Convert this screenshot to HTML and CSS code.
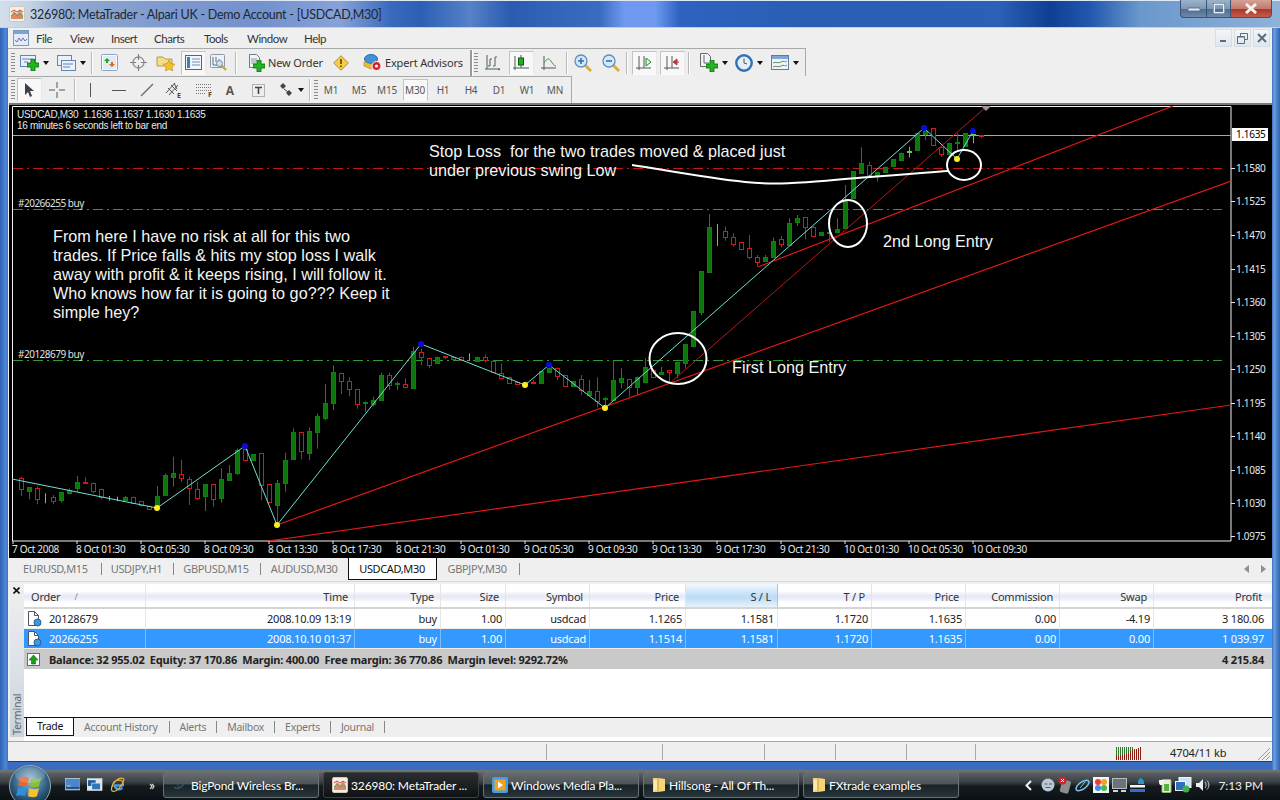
FILE: index.html
```html
<!DOCTYPE html>
<html lang="en">
<head>
<meta charset="utf-8">
<title>326980: MetaTrader - Alpari UK - Demo Account - [USDCAD,M30]</title>
<link rel="stylesheet" href="styles.css">
</head>
<body>
<svg class="defs" width="0" height="0" aria-hidden="true">
  <symbol id="i-plus" viewBox="0 0 12 12"><path d="M4 0h4v4h4v4H8v4H4V8H0V4h4z" fill="#22b422" stroke="#0c6a0c" stroke-width=".8"/></symbol>
  <symbol id="i-logo" viewBox="0 0 16 16"><rect x=".5" y=".5" width="15" height="15" rx="1.5" fill="#f6efe4" stroke="#cfc7bb"/><path d="M2 10l3-5 3 3 3-4 3 5v4H2z" fill="#d98a6a"/><path d="M2 10l3-3 3 3 3-2 3 3" fill="none" stroke="#6aa36a"/><path d="M2 6l3-2 3 2 3-2 3 2" fill="none" stroke="#c44"/></symbol>
  <symbol id="i-bars" viewBox="0 0 18 18"><path d="M3 1v14M1 15h15M14 15l2 1M6 5v7M11 3v9" fill="none" stroke="#4a5a5a"/><path d="M6 5h2M6 12H4M11 3h2M11 12H9" fill="none" stroke="#4a6a4a"/></symbol>
  <symbol id="i-axes" viewBox="0 0 18 18"><path d="M4 2v14M1 14h15" fill="none" stroke="#4a5a5a"/></symbol>
</svg>

<div class="app">
  <header class="title">
    <svg class="ico16"><use href="#i-logo"/></svg>
    <span class="title-text">326980: MetaTrader - Alpari UK - Demo Account - [USDCAD,M30]</span>
    <div class="caption">
      <span class="cap cap-min"><svg width="12" height="6"><rect x="0" y="2" width="12" height="3" fill="#e8eef5" stroke="#59708c"/></svg></span>
      <span class="cap cap-max"><svg width="12" height="11"><rect x="1" y="1" width="10" height="9" fill="none" stroke="#e8eef5" stroke-width="2"/><rect x="0" y="0" width="12" height="11" fill="none" stroke="#3b5474"/></svg></span>
      <span class="cap cap-close"><svg width="14" height="11"><path d="M2 1l10 9M12 1L2 10" stroke="#f4f1ee" stroke-width="3"/></svg></span>
    </div>
  </header>

  <div class="main">
    <nav class="menu">
      <svg class="menu-ico" width="16" height="16" viewBox="0 0 16 16"><rect x=".5" y=".5" width="15" height="15" fill="#e2ecf8" stroke="#7b98bd"/><rect x="1" y="1" width="14" height="3" fill="#7ba3d6"/><path d="M2 10l2 2 2-4 2 3 2-3 2 3 2-2" fill="none" stroke="#7a6aa8"/></svg>
      <span class="m-file">File</span><span class="m-view">View</span><span class="m-insert">Insert</span><span class="m-charts">Charts</span><span class="m-tools">Tools</span><span class="m-window">Window</span><span class="m-help">Help</span>
      <div class="mdi">
        <span class="mdi-btn"><svg width="9" height="9"><path d="M1 7h6" stroke="#5b6b80" stroke-width="2"/></svg></span>
        <span class="mdi-btn"><svg width="11" height="11"><path d="M3.500 3V.5h7v6H8M.5 3.500h7v7h-7z" fill="none" stroke="#5b6b80"/><path d="M.5 4h7" stroke="#5b6b80"/></svg></span>
        <span class="mdi-btn"><svg width="10" height="10"><path d="M1 1l8 8M9 1l-8 8" stroke="#5b6b80" stroke-width="2"/></svg></span>
      </div>
    </nav>

    <div class="toolbar tb1">
      <span class="grip"></span>
      <span class="tb w36 ml1">
        <svg width="19" height="16" viewBox="0 0 19 16"><rect x=".5" y=".5" width="15" height="11" fill="#e9f1fb" stroke="#5f86b5"/><path d="M2 4h12M4 7h4" stroke="#5f86b5"/><use href="#i-plus" x="7" y="4" width="12" height="12"/></svg><i class="caret"></i>
      </span>
      <span class="tb w38">
        <svg width="19" height="16" viewBox="0 0 19 16"><rect x=".5" y=".5" width="14" height="10" fill="#e9f1fb" stroke="#5f86b5"/><rect x="4.500" y="5.500" width="14" height="10" fill="#e9f1fb" stroke="#5f86b5"/><path d="M6 9h10M6 12h7" stroke="#5f86b5"/></svg><i class="caret"></i>
      </span>
      <span class="sep"></span>
      <span class="tb w30">
        <svg width="17" height="17" viewBox="0 0 17 17"><rect x=".5" y=".5" width="16" height="16" rx="1" fill="#f5f8fc" stroke="#8aa6c6"/><rect x="2" y="2" width="13" height="13" fill="#dfeaf5"/><path d="M6 4l3 3H7v2H5V7H3z" fill="#1fa51f"/><path d="M11 13l-3-3h2V8h2v2h2z" fill="#d86a18"/></svg>
      </span>
      <span class="tb w28">
        <svg width="17" height="17" viewBox="0 0 17 17"><circle cx="8.500" cy="8.500" r="5.500" fill="none" stroke="#8a8f94" stroke-width="1.300"/><path d="M8.500 0v6M8.500 11v6M0 8.500h6M11 8.500h6" stroke="#7d8287" stroke-width="1.200"/></svg>
      </span>
      <span class="tb w28">
        <svg width="20" height="17" viewBox="0 0 20 17"><path d="M1 3h6l2 2h7v7H1z" fill="#f3dc8a" stroke="#b89b45"/><path d="M13 6l1.900 3.600 4 .6-2.900 2.800.7 4-3.700-1.900-3.600 1.900.7-4-2.900-2.800 4-.6z" fill="#f2c132" stroke="#b5881a" stroke-width=".6"/></svg>
      </span>
      <span class="tb tb-on w25 ml1">
        <svg width="17" height="15" viewBox="0 0 17 15"><rect x=".5" y=".5" width="16" height="14" fill="#f2f7fd" stroke="#41698f"/><rect x="2" y="2" width="3" height="11" fill="#3d7dc4"/><path d="M7 4h8M7 7h8M7 10h8" stroke="#6f8fb3"/></svg>
      </span>
      <span class="tb w25">
        <svg width="18" height="18" viewBox="0 0 18 18"><rect x=".5" y=".5" width="14" height="13" rx="1" fill="#eef2f6" stroke="#8b98a6"/><path d="M3 3v8M3 11h9M6 3v5M9 5v4" stroke="#5e6f80"/><path d="M11 11l5 5" stroke="#d0a728" stroke-width="2.400"/><circle cx="9.500" cy="9.500" r="3" fill="#cfe3f5" stroke="#6d8aa6"/></svg>
      </span>
      <span class="sep ml4"></span>
      <span class="tb-txt order">
        <svg width="18" height="18" viewBox="0 0 18 18"><path d="M2.500.5h7l3 3v10h-10z" fill="#f2f4f7" stroke="#6f7a86"/><path d="M4 5h6M4 7h6M4 9h5" stroke="#8a95a0"/><use href="#i-plus" x="6" y="6" width="12" height="12"/></svg>
        <span>New Order</span>
      </span>
      <span class="tb w32 warn">
        <svg width="16" height="16" viewBox="0 0 16 16"><path d="M8 .7L15.300 8 8 15.300.7 8z" fill="#f5cc44" stroke="#a88f3f"/><path d="M8 4v5" stroke="#7b4a10" stroke-width="1.800"/><circle cx="8" cy="11.200" r="1" fill="#7b4a10"/></svg>
      </span>
      <span class="tb-txt expert">
        <svg width="19" height="18" viewBox="0 0 19 18"><ellipse cx="8" cy="5" rx="6.500" ry="4.500" fill="#3f93d6" stroke="#2b6a9c"/><path d="M1 8l7 2 7-2 1 4-8 3-7-3z" fill="#e9bd3c" stroke="#a8842a" stroke-width=".6"/><circle cx="13.500" cy="12" r="4.500" fill="#d8202a" stroke="#fff"/><circle cx="13.500" cy="12" r="1.600" fill="#fff"/></svg>
        <span>Expert Advisors</span>
      </span>
      <span class="sep dark ml7"></span>
      <span class="grip"></span>
      <span class="tb w27 ml2"><svg width="18" height="18"><use href="#i-bars"/></svg></span>
      <span class="tb tb-on w25 ml2"><svg width="18" height="18" viewBox="0 0 18 18"><path d="M3 2v14M1 14h16M9 1v13" fill="none" stroke="#4a5a5a"/><rect x="6.500" y="4" width="5" height="7" fill="#1db31d" stroke="#0a5a0a"/></svg></span>
      <span class="tb w31"><svg width="18" height="18" viewBox="0 0 18 18"><use href="#i-axes"/><path d="M4 9c3-5 5-5 7-2s3 5 5 5" fill="none" stroke="#5c8a5c"/></svg></span>
      <span class="sep"></span>
      <span class="tb w28"><svg width="18" height="18" viewBox="0 0 18 18"><path d="M11 11l6 6" stroke="#d9b13a" stroke-width="3"/><circle cx="7" cy="7" r="6" fill="#d6e8f8" stroke="#5d8fc0" stroke-width="1.300"/><path d="M4 7h6M7 4v6" stroke="#2f6fb0" stroke-width="1.600"/></svg></span>
      <span class="tb w28"><svg width="18" height="18" viewBox="0 0 18 18"><path d="M11 11l6 6" stroke="#d9b13a" stroke-width="3"/><circle cx="7" cy="7" r="6" fill="#d6e8f8" stroke="#5d8fc0" stroke-width="1.300"/><path d="M4 7h6" stroke="#2f6fb0" stroke-width="1.600"/></svg></span>
      <span class="sep"></span>
      <span class="tb tb-on w25 ml3"><svg width="18" height="18" viewBox="0 0 18 18"><use href="#i-axes"/><path d="M9 2v12" stroke="#4a5a5a"/><path d="M11 4l5 4-5 4z" fill="#eaf5ea" stroke="#1c8a1c"/></svg></span>
      <span class="tb tb-on w25 ml3"><svg width="18" height="18" viewBox="0 0 18 18"><use href="#i-axes"/><path d="M9 2v12" stroke="#4a5a5a"/><path d="M16 8h-3M14 5l-4 3 4 3z" fill="#c2333f" stroke="#c2333f"/></svg></span>
      <span class="sep ml3"></span>
      <span class="tb w40 ml3">
        <svg width="19" height="19" viewBox="0 0 19 19"><path d="M1.500.5h7l3 3v10h-10z" fill="#f3f4f5" stroke="#616a72"/><path d="M5 2v8h5" fill="none" stroke="#616a72"/><use href="#i-plus" x="7" y="7" width="12" height="12"/></svg><i class="caret"></i>
      </span>
      <span class="tb w30">
        <svg width="18" height="18" viewBox="0 0 18 18"><circle cx="9" cy="9" r="7.700" fill="#e6edf5" stroke="#2f71b6" stroke-width="2.400"/><path d="M9 4.500V9l3 1" fill="none" stroke="#555"/></svg><i class="caret"></i>
      </span>
      <span class="tb w32 ml5">
        <svg width="18" height="15" viewBox="0 0 18 15"><rect x=".5" y=".5" width="17" height="14" fill="#eef4fb" stroke="#587fa6"/><rect x="1" y="1" width="16" height="3" fill="#7fa7d2"/><path d="M2 8c3-2 5 1 8-1s4 1 6-1M2 12c3-2 5 1 8-1s4 1 6-1" fill="none" stroke="#6a8f6a"/></svg><i class="caret"></i>
      </span>
    </div>

    <div class="toolbar tb2">
      <span class="grip"></span>
      <span class="tb tb-on w25 ml2"><svg width="12" height="16" viewBox="0 0 12 16"><path d="M1 1v12l3-3 2 5 2-1-2-5h4z" fill="#3c4248"/></svg></span>
      <span class="tb w22 ml4"><svg width="16" height="16" viewBox="0 0 16 16"><path d="M8 0v6M8 10v6M0 8h6M10 8h6" stroke="#555"/></svg></span>
      <span class="sep ml6"></span>
      <span class="tb w26"><svg width="3" height="14"><path d="M1.500 0v14" stroke="#555"/></svg></span>
      <span class="tb w32"><svg width="14" height="3"><path d="M0 1.500h14" stroke="#555"/></svg></span>
      <span class="tb w24"><svg width="14" height="14"><path d="M1 13L13 1" stroke="#666" stroke-width="1.200"/></svg></span>
      <span class="tb w30"><svg width="18" height="18" viewBox="0 0 18 18"><path d="M1 12L10 2M4 14L13 4M3 7l6 6M6 4l6 6M9 2l3 6" fill="none" stroke="#555"/><text x="12" y="17" class="icotext">E</text></svg></span>
      <span class="tb w30"><svg width="18" height="16" viewBox="0 0 18 16"><path d="M1 2.500h15M1 5.500h15M1 8.500h15M1 11.500h10" stroke="#777" stroke-dasharray="1 1"/><text x="13" y="15" class="icotext">F</text></svg></span>
      <span class="tb w22 a-glyph">A</span>
      <span class="tb w34"><svg width="13" height="13" viewBox="0 0 13 13"><rect x=".5" y=".5" width="12" height="12" fill="none" stroke="#777" stroke-dasharray="1 1"/><path d="M3 3.500h7M6.500 3v7" stroke="#444" stroke-width="1.600"/></svg></span>
      <span class="tb w28 ml2"><svg width="16" height="14" viewBox="0 0 16 14"><path d="M5 0l3 3-3 3-3-3zM11 7l3 3-3 3-3-3z" fill="#444"/><path d="M6 6l4 3" stroke="#444"/></svg><i class="caret"></i></span>
      <span class="sep ml4"></span>
      <span class="grip ml2"></span>
      <div class="periods">
        <span>M1</span><span>M5</span><span>M15</span><span class="on">M30</span><span>H1</span><span>H4</span><span>D1</span><span>W1</span><span>MN</span>
      </div>
    </div>

    <section class="chart">
      <svg class="plot" width="1262" height="453" viewBox="9 105 1262 453">
        <defs><clipPath id="plot-clip"><rect x="12" y="106" width="1219" height="435"/></clipPath></defs>
        <path class="frame" d="M12.500 541V106.500H1231V541z"/>
        <path class="ticks" d="M13 541v3M77 541v3M141 541v3M205 541v3M269 541v3M333 541v3M397 541v3M461 541v3M525 541v3M589 541v3M653 541v3M717 541v3M781 541v3M845 541v3M909 541v3M973 541v3M1231 168.500h4M1231 201.500h4M1231 235.500h4M1231 269.500h4M1231 302.500h4M1231 336.500h4M1231 369.500h4M1231 403.500h4M1231 436.500h4M1231 470.500h4M1231 503.500h4M1231 536.500h4"/>
        <g clip-path="url(#plot-clip)">
          <line class="ask" x1="13" y1="135.500" x2="1231" y2="135.500"/>
          <line class="sl" x1="13" y1="168.500" x2="1222" y2="168.500"/>
          <line class="entry" x1="13" y1="209.500" x2="1222" y2="209.500"/>
          <line class="entry" x1="13" y1="360.500" x2="1222" y2="360.500"/>
          <g id="candles"></g>
          <line class="trend" x1="268" y1="541" x2="1231" y2="405"/>
          <line class="trend" x1="277" y1="525" x2="1231" y2="181"/>
          <line class="trend" x1="758" y1="267" x2="1173" y2="106"/>
          <line class="trend thin" x1="670" y1="383" x2="986" y2="107"/>
          <polyline class="zigzag" points="12,479 157,508 245,446 277,525 421,344 525,385 549,365 605,408 924,128 957,159 973,131"/>
          <circle class="lo" cx="157" cy="508" r="3"/><circle class="lo" cx="277" cy="525" r="3"/><circle class="lo" cx="525" cy="385" r="3"/><circle class="lo" cx="605" cy="408" r="3"/><circle class="lo" cx="957" cy="159" r="3"/>
          <circle class="hi" cx="245" cy="446" r="3"/><circle class="hi" cx="421" cy="344" r="3"/><circle class="hi" cx="549" cy="365" r="3"/><circle class="hi" cx="924" cy="128" r="3"/><circle class="hi" cx="973" cy="131" r="3"/>
          <path class="marker" d="M981 106h10l-5 5z"/>
        </g>
        <path class="paint" d="M632 165C665 170 705 178 745 182S815 181 870 177 930 172 948 171"/>
        <ellipse class="paint" cx="678" cy="358.500" rx="28.500" ry="25.500"/>
        <ellipse class="paint" cx="848" cy="223.500" rx="19" ry="23.500"/>
        <ellipse class="paint" cx="964" cy="165" rx="17" ry="15"/>

        <text class="info" x="17" y="118">USDCAD,M30  1.1636 1.1637 1.1630 1.1635</text>
        <text class="info" x="17" y="129">16 minutes 6 seconds left to bar end</text>
        <text class="small" x="18" y="207">#20266255 buy</text>
        <text class="small" x="18" y="358">#20128679 buy</text>

        <text class="note" x="429" y="157">Stop Loss  for the two trades moved &amp; placed just</text>
        <text class="note" x="429" y="176">under previous swing Low</text>
        <text class="note" x="53" y="242">From here I have no risk at all for this two</text>
        <text class="note" x="53" y="261">trades. If Price falls &amp; hits my stop loss I walk</text>
        <text class="note" x="53" y="280">away with profit &amp; it keeps rising, I will follow it.</text>
        <text class="note" x="53" y="299">Who knows how far it is going to go??? Keep it</text>
        <text class="note" x="53" y="318">simple hey?</text>
        <text class="note" x="732" y="373">First Long Entry</text>
        <text class="note" x="883" y="247">2nd Long Entry</text>

        <rect class="price-box" x="1232" y="128" width="36" height="13"/>
        <text class="axis current" x="1236" y="138">1.1635</text>
        <text class="axis" x="1236" y="172">1.1580</text>
        <text class="axis" x="1236" y="205">1.1525</text>
        <text class="axis" x="1236" y="239">1.1470</text>
        <text class="axis" x="1236" y="273">1.1415</text>
        <text class="axis" x="1236" y="306">1.1360</text>
        <text class="axis" x="1236" y="340">1.1305</text>
        <text class="axis" x="1236" y="373">1.1250</text>
        <text class="axis" x="1236" y="407">1.1195</text>
        <text class="axis" x="1236" y="440">1.1140</text>
        <text class="axis" x="1236" y="474">1.1085</text>
        <text class="axis" x="1236" y="507">1.1030</text>
        <text class="axis" x="1236" y="540">1.0975</text>

        <text class="axis" x="12" y="553">7 Oct 2008</text>
        <text class="axis" x="76" y="553">8 Oct 01:30</text>
        <text class="axis" x="140" y="553">8 Oct 05:30</text>
        <text class="axis" x="204" y="553">8 Oct 09:30</text>
        <text class="axis" x="268" y="553">8 Oct 13:30</text>
        <text class="axis" x="332" y="553">8 Oct 17:30</text>
        <text class="axis" x="396" y="553">8 Oct 21:30</text>
        <text class="axis" x="460" y="553">9 Oct 01:30</text>
        <text class="axis" x="524" y="553">9 Oct 05:30</text>
        <text class="axis" x="588" y="553">9 Oct 09:30</text>
        <text class="axis" x="652" y="553">9 Oct 13:30</text>
        <text class="axis" x="716" y="553">9 Oct 17:30</text>
        <text class="axis" x="780" y="553">9 Oct 21:30</text>
        <text class="axis" x="844" y="553">10 Oct 01:30</text>
        <text class="axis" x="908" y="553">10 Oct 05:30</text>
        <text class="axis" x="972" y="553">10 Oct 09:30</text>
      </svg>
    </section>

    <div class="symtabs">
      <span class="st st1">EURUSD,M15</span><i class="vbar"></i>
      <span class="st st2">USDJPY,H1</span><i class="vbar"></i>
      <span class="st st2">GBPUSD,M15</span><i class="vbar"></i>
      <span class="st st3">AUDUSD,M30</span>
      <span class="st st-on">USDCAD,M30</span>
      <span class="st st4">GBPJPY,M30</span><i class="vbar"></i>
      <span class="scroll"><svg width="6" height="8"><path d="M5 0v8L0 4z" fill="#8a9097"/></svg><svg width="6" height="8"><path d="M1 0v8l5-4z" fill="#8a9097"/></svg></span>
    </div>

    <section class="terminal">
      <aside class="tside">
        <svg class="tclose" width="7" height="7"><path d="M.5.500l6 6M6.500.500l-6 6" stroke="#111" stroke-width="1.600"/></svg>
        <span class="tlabel">Terminal</span>
      </aside>
      <div class="tbody">
        <div class="row head">
          <span class="left">Order<i class="sort">/</i></span><span>Time</span><span>Type</span><span>Size</span><span>Symbol</span><span>Price</span><span class="sorted">S / L</span><span>T / P</span><span>Price</span><span>Commission</span><span>Swap</span><span class="last">Profit</span>
        </div>
        <div class="row item">
          <span class="left"><svg width="15" height="16" viewBox="0 0 15 16"><path d="M1.500.500h6l4 4v10h-10z" fill="#fff" stroke="#4a5560"/><path d="M7.500.500v4h4" fill="none" stroke="#4a5560"/><circle cx="10.500" cy="11.500" r="3.500" fill="#3f9ad8" stroke="#1f5f90"/></svg>20128679</span><span>2008.10.09 13:19</span><span>buy</span><span>1.00</span><span>usdcad</span><span>1.1265</span><span>1.1581</span><span>1.1720</span><span>1.1635</span><span>0.00</span><span>-4.19</span><span class="last">3 180.06</span>
        </div>
        <div class="row item sel">
          <span class="left"><svg width="15" height="16" viewBox="0 0 15 16"><path d="M1.500.500h6l4 4v10h-10z" fill="#fff" stroke="#4a5560"/><path d="M7.500.500v4h4" fill="none" stroke="#4a5560"/><circle cx="10.500" cy="11.500" r="3.500" fill="#3f9ad8" stroke="#1f5f90"/></svg>20266255</span><span>2008.10.10 01:37</span><span>buy</span><span>1.00</span><span>usdcad</span><span>1.1514</span><span>1.1581</span><span>1.1720</span><span>1.1635</span><span>0.00</span><span>0.00</span><span class="last">1 039.97</span>
        </div>
        <div class="balance">
          <svg width="13" height="13" viewBox="0 0 13 13"><rect x=".5" y=".5" width="12" height="12" fill="#fff" stroke="#5f6f5f"/><path d="M6.500 2L11 7H8.500v4h-4V7H2z" fill="#18a018" stroke="#0b5f0b" stroke-width=".6"/></svg>
          <span class="bal-text">Balance: 32 955.02&nbsp; Equity: 37 170.86&nbsp; Margin: 400.00&nbsp; Free margin: 36 770.86&nbsp; Margin level: 9292.72%</span>
          <span class="bal-total">4 215.84</span>
        </div>
        <div class="tfill"></div>
        <div class="ttabs">
          <span class="tt-on">Trade</span>
          <span class="tt tt-first">Account History</span><i class="vbar"></i>
          <span class="tt">Alerts</span><i class="vbar"></i>
          <span class="tt">Mailbox</span><i class="vbar"></i>
          <span class="tt">Experts</span><i class="vbar"></i>
          <span class="tt">Journal</span><i class="vbar"></i>
        </div>
      </div>
    </section>

    <footer class="status">
      <i class="sc s1"></i><i class="sc s2"></i><i class="sc s3"></i><i class="sc s4"></i><i class="sc s5"></i><i class="sc s6"></i><i class="sc s7"></i>
      <svg class="conn" width="25" height="13" viewBox="0 0 25 13"><path d="M.5 0v13M2.500 0v13M4.500 0v13M6.500 0v13M8.500 0v13M10.500 0v13M12.500 0v13M14.500 0v7M16.500 0v7" stroke="#2f7a2f"/><path d="M.5 8v5M2.500 9v4M4.500 8v5M6.500 8v5M8.500 7v6M10.500 7v6M12.500 6v7M14.500 4v9M16.500 3v10M18.500 2v11M20.500 2v11M22.500 1v12M24.500 0v13" stroke="#8a1c12"/></svg>
      <span class="kb">4704/11 kb</span>
      <svg class="grip-corner" width="12" height="12"><path d="M0 12L12 0M4 12l8-8M8 12l4-4" stroke="#9a9a9a"/></svg>
    </footer>
  </div>

  <footer class="taskbar">
    <svg class="orb" width="44" height="44" viewBox="0 0 44 44">
      <defs>
        <radialGradient id="orb-g" cx=".5" cy=".35" r=".7"><stop offset="0" stop-color="#9bc0d8"/><stop offset=".6" stop-color="#2f5f83"/><stop offset="1" stop-color="#0d2533"/></radialGradient>
      </defs>
      <circle cx="22" cy="22" r="20.500" fill="url(#orb-g)" stroke="#9aa7ad"/>
      <path d="M12 14c4-2 6-1 9 0l-2 8c-3-1-6-1-9 0z" fill="#e8672b"/>
      <path d="M23 14c3 1 6 2 10 0l-2 8c-3 2-7 1-9 0z" fill="#86bf3a"/>
      <path d="M10 24c3-1 6-1 9 0l-2 8c-3-1-6-1-9 0z" fill="#2f8fd8"/>
      <path d="M21 24c3 1 6 2 10 0l-2 8c-3 2-7 1-9 0z" fill="#f4c22f"/>
      <ellipse cx="22" cy="11" rx="15" ry="8" fill="#fff" opacity=".16"/>
    </svg>
    <div class="quick">
      <svg width="16" height="14" viewBox="0 0 16 14"><rect width="16" height="12" fill="#4d86c9" stroke="#c6d6e6"/><rect x="1" y="9" width="14" height="2" fill="#1e4f88"/><path d="M2 8h4" stroke="#bcd"/></svg>
      <svg width="16" height="14" viewBox="0 0 16 14"><rect width="16" height="13" fill="#dce6f2"/><rect x="1" y="2" width="8" height="6" fill="#1e5d9d"/><rect x="5" y="5" width="9" height="7" fill="#2f78b8" stroke="#fff" stroke-width=".6"/></svg>
      <svg width="16" height="17" viewBox="0 0 16 17"><path d="M14 8.500H5c0 4 5 5 8 2.500" fill="none" stroke="#4a9be0" stroke-width="2.400"/><path d="M3 10c-1-5 3-8 8-7 3 1 3 4 3 5.500M5 5C2 7 1 12 2 14c2 2 7-1 10-6s3-7 1-7c-2-1-6 1-8 4z" fill="none" stroke="#e8b13a" stroke-width="1.300"/></svg>
      <span class="more">»</span>
    </div>
    <div class="tasks">
      <span class="task first"><svg width="16" height="16" viewBox="0 0 16 16"><path d="M2 10c3 3 8 1 12-6" fill="none" stroke="#3f6076" stroke-width="1.400"/><path d="M5 7l2 3" stroke="#3f6076"/></svg><span>BigPond Wireless Br...</span></span>
      <span class="task active"><svg width="16" height="16"><use href="#i-logo"/></svg><span>326980: MetaTrader ...</span></span>
      <span class="task"><svg width="16" height="16" viewBox="0 0 16 16"><rect width="16" height="16" rx="2" fill="#3f9fe8"/><rect x="2.500" y="2.500" width="11" height="11" rx="1" fill="#f1a11f"/><path d="M6 4.500l5 3.500-5 3.500z" fill="#fff"/></svg><span>Windows Media Pla...</span></span>
      <span class="task"><svg width="14" height="16" viewBox="0 0 14 16"><path d="M1 1h5l7 1v12l-7 1H1z" fill="#f4d678"/><path d="M6 1v14" stroke="#c99f3a"/><path d="M2 3h3v10H2z" fill="#fbeaa8"/></svg><span>Hillsong - All Of Th...</span></span>
      <span class="task"><svg width="14" height="16" viewBox="0 0 14 16"><path d="M1 1h5l7 1v12l-7 1H1z" fill="#f4d678"/><path d="M6 1v14" stroke="#c99f3a"/><path d="M2 3h3v10H2z" fill="#fbeaa8"/></svg><span>FXtrade examples</span></span>
    </div>
    <div class="tray">
      <svg class="chev" width="7" height="11"><path d="M6 1L1.500 5.500 6 10" fill="none" stroke="#eef2f4" stroke-width="2"/></svg>
      <svg width="14" height="14"><circle cx="7" cy="7" r="6.500" fill="#b9c8d4"/><path d="M3.500 6h3M8 6h3M4.500 9.500h5" stroke="#56636e"/></svg>
      <svg width="14" height="18" viewBox="0 0 14 18"><rect x="3" y="4" width="9" height="13" rx="2" fill="#8a8e8e" transform="rotate(15 7 10)"/><circle cx="4.500" cy="4.500" r="4" fill="#d81f2a"/><path d="M3 3l3 3M6 3L3 6" stroke="#fff"/></svg>
      <svg width="15" height="13" viewBox="0 0 15 13"><ellipse cx="7.500" cy="6.500" rx="7.500" ry="3.500" fill="none" stroke="#7cc1ea" stroke-width="1.500" transform="rotate(-35 7.500 6.500)"/><path d="M5 9L10 3" stroke="#7cc1ea"/></svg>
      <svg width="16" height="16" viewBox="0 0 16 16"><rect width="16" height="16" fill="#f4f4f0"/><circle cx="5" cy="5" r="3" fill="#e83d3d"/><circle cx="11" cy="5" r="3" fill="#f2a31f"/><circle cx="5" cy="11" r="3" fill="#3d8fe8"/><circle cx="11" cy="11" r="3" fill="#4bb84b"/></svg>
      <svg width="15" height="15" viewBox="0 0 15 15"><rect x=".5" y=".5" width="14" height="10" fill="#6d7479" stroke="#b9bec2"/><path d="M1 13h5M9 13h5" stroke="#cfd4d8" stroke-width="2"/></svg>
      <svg width="15" height="16" viewBox="0 0 15 16"><path d="M10 1a5 5 0 0 1 4 6H8V4z" fill="#2a97c9"/><rect x="0" y="8" width="15" height="2.500" fill="#f4f4f4"/><rect x="0" y="12" width="15" height="3" fill="#2f6fd4"/></svg>
      <svg class="tray-gap" width="13" height="15" viewBox="0 0 13 15"><rect x="3" y="1.500" width="9" height="13" rx="1" fill="#e8efd8" stroke="#9cb089"/><rect x="5" y="6" width="5" height="7" fill="#55b03f"/><path d="M0 2h4v3L3 7H1L0 5z" fill="#f5f5f0"/></svg>
      <svg width="17" height="16" viewBox="0 0 17 16"><rect x="4" y=".5" width="12" height="10" fill="#cfe2f5" stroke="#f2f6fa"/><rect x=".5" y="4.500" width="10" height="9" fill="#2d6fb8" stroke="#f2f6fa"/><circle cx="11" cy="12" r="3.500" fill="#3fb04a"/></svg>
      <svg width="15" height="14" viewBox="0 0 15 14"><path d="M1 5h3l4-4v12l-4-4H1z" fill="#e8eef2"/><path d="M10 4c1.500 1.500 1.500 4.500 0 6M12 2.500c2.500 2.500 2.500 6.500 0 9" fill="none" stroke="#c8d2d8"/></svg>
      <span class="clock">7:13 PM</span>
    </div>
  </footer>
</div>
<script src="chart.js"></script>
</body>
</html>
```
FILE: styles.css
```css
* { box-sizing: border-box; }
html, body { margin: 0; padding: 0; }
body {
  width: 1280px; height: 800px; overflow: hidden;
  font-family: "Noto Sans", "Open Sans", sans-serif;
  background: #3d74c6;
  color: #222;
}
i { font-style: normal; }
.defs { position: absolute; }
.app { width: 1280px; height: 800px; display: flex; flex-direction: column; position: relative;
  background: linear-gradient(to right, #2f62b4 0, #4f88d8 6px, #3a6dc0 8px, #3a6dc0 1272px, #6a9fdc 1274px, #2f62b4 1280px); }

/* title bar */
.title { height: 28px; flex: none; display: flex; align-items: center; padding-left: 9px; position: relative;
  border-top: 1px solid #dfe9f5; border-bottom: 1px solid #bcd0ea;
  background: linear-gradient(to right, #d4dfec 0, #c4d2e4 30px, #8fa8d0 70px, #7f9ace 160px, #7391cc 260px, #87a2d8 340px, #3b6abc 390px, #2c5fb4 420px, #5781c8 470px, #2b5cb0 510px, #3a6dc0 600px, #6f9af0 625px, #6f9af0 655px, #2d62c0 680px, #2a5fb5 800px, #2a60b5 1000px, #0f3f92 1050px, #2158ae 1090px, #6a97cc 1140px, #8fb3d8 1280px); }
.ico16 { width: 16px; height: 16px; flex: none; }
.title-text { margin-left: 5px; font-family: Lato, sans-serif; font-size: 12.500px; letter-spacing: -.25px; color: #1d2733; white-space: nowrap; }
.caption { position: absolute; right: 8px; top: -1px; display: flex; height: 18px; }
.cap { display: flex; align-items: center; justify-content: center; height: 18px;
  border: 1px solid #3a5478; border-top: 0; }
.cap-min { width: 26px; border-right: 0; border-radius: 0 0 0 4px; background: linear-gradient(#9cb3cc, #7d97b5 50%, #4f6b8d 51%, #6d89a8); }
.cap-max { width: 24px; border-right: 0; background: linear-gradient(#9cb3cc, #7d97b5 50%, #4f6b8d 51%, #6d89a8); }
.cap-close { width: 42px; border-radius: 0 0 4px 0; background: linear-gradient(#d8a095, #c27a6c 50%, #a8352a 51%, #c65a4a); }

/* shell */
.main { margin: 0 8px; height: 734px; flex: none; background: #efefef; display: flex; flex-direction: column; border-bottom: 1px solid #0e3f87; }

/* menu */
.menu { height: 20px; flex: none; display: flex; align-items: center; position: relative; font-size: 11.500px; letter-spacing: -.45px; font-family: Lato, sans-serif; color: #333; }
.menu-ico { margin-left: 5px; flex: none; }
.m-file { width: 16px; margin-left: 7px; }
.m-view { width: 22px; margin-left: 18px; }
.m-insert { width: 25px; margin-left: 19px; }
.m-charts { width: 30px; margin-left: 18px; }
.m-tools { width: 25px; margin-left: 20px; }
.m-window { width: 38px; margin-left: 18px; }
.m-help { width: 21px; margin-left: 19px; }
.mdi { position: absolute; right: 2px; top: 1px; display: flex; gap: 2px; }
.mdi-btn { width: 17px; height: 18px; display: flex; align-items: center; justify-content: center;
  border: 1px solid #d6dde5; background: linear-gradient(#f4f6f8, #dfe6ee); }

/* toolbars */
.toolbar { height: 28px; flex: none; display: flex; align-items: center; padding-left: 3px; background: #eeeeee; position: relative; }
.tb1 { width: 798px; border-top: 1px solid #a9a9a9; border-right: 1px solid #a9a9a9; }
.tb2 { width: 564px; height: 27px; border-top: 1px solid #a9a9a9; border-right: 1px solid #a9a9a9; }
.grip { width: 4px; height: 20px; flex: none; background: repeating-linear-gradient(#8a8a8a 0 1px, #efefef 1px 3px); }
.sep { width: 2px; height: 22px; flex: none; margin: 0 1px; background: #b9b9b9; border-right: 1px solid #fff; }
.sep.dark { background: #9a9a9a; width: 3px; height: 26px; }
.tb { height: 24px; flex: none; display: flex; align-items: center; justify-content: center; gap: 4px; }
.tb svg { flex: none; }
.tb-on { background: #f8f8f8; border: 1px solid #c3c3c3; border-bottom-color: #fafafa; border-right-color: #e8e8e8; }
.caret { width: 0; height: 0; border: 3px solid transparent; border-top: 4px solid #111; border-bottom: 0; flex: none; }
.w22 { width: 22px; } .w24 { width: 24px; } .w25 { width: 25px; } .w26 { width: 26px; } .w27 { width: 27px; } .w28 { width: 28px; } .w30 { width: 30px; } .w31 { width: 31px; } .w32 { width: 32px; } .w34 { width: 34px; } .w36 { width: 36px; } .w38 { width: 38px; } .w40 { width: 40px; }
.ml1 { margin-left: 1px; } .ml2 { margin-left: 2px; } .ml3 { margin-left: 3px; } .ml4 { margin-left: 4px; } .ml5 { margin-left: 5px; } .ml6 { margin-left: 6px; } .ml7 { margin-left: 7px; }
.tb-txt { display: flex; align-items: center; gap: 3px; font-family: "Noto Sans", sans-serif; font-size: 11px; letter-spacing: -.15px; color: #333; flex: none; }
.order { margin-left: 9px; }
.warn { margin-left: 2px; }
.expert { margin-left: 6px; }
.icotext { font: bold 7px "Noto Sans", sans-serif; fill: #444; }
.a-glyph { font: bold 12px "Open Sans", sans-serif; color: #555; }
.periods { display: flex; margin-left: -1px; font: 10px "Noto Sans", sans-serif; letter-spacing: -.2px; color: #555; align-items: center; }
.periods span { width: 28px; text-align: center; }
.periods .on { width: 25px; margin: 0 1.500px; height: 22px; line-height: 20px; background: #f8f8f8; border: 1px solid #c3c3c3; border-bottom-color: #fafafa; }

/* chart */
.chart { height: 455px; flex: none; margin-left: 1px; background: #000; border-top: 2px solid #7a7a7a; position: relative; }
.plot { display: block; }
.frame { fill: none; stroke: #f2f2f2; }
.ticks { fill: none; stroke: #e6e6e6; }
.ask { stroke: #a8a8a8; }
.sl { stroke: #c81616; stroke-dasharray: 10 4 2 4; }
.entry { stroke: #329a32; stroke-dasharray: 10 4 2 4; }
.trend { stroke: #e01818; stroke-width: 1.200; }
.trend.thin { stroke: #b81a1a; stroke-width: 1; }
.zigzag { fill: none; stroke: #70e0d4; stroke-width: 1; }
.lo { fill: #ffef1c; }
.hi { fill: #0a0ae0; }
.marker { fill: #9a9a9a; }
.paint { fill: none; stroke: #fff; stroke-width: 2; }
.info { font: 10px "Liberation Sans", sans-serif; letter-spacing: -.31px; fill: #e8e8e8; white-space: pre; }
.small { font: 10px "Noto Sans", sans-serif; letter-spacing: -.5px; fill: #e0e0e0; }
.axis { font: 10px "Noto Sans", sans-serif; letter-spacing: -.3px; fill: #e8e8e8; }
.axis.current { fill: #000; }
.price-box { fill: #fff; }
.note { font: 16.200px "Liberation Sans", sans-serif; fill: #f4f4f4; white-space: pre; }
.c-wick-r { stroke: #d81818; }
.c-wick-g { stroke: #0f8a0f; }
.c-wick-d { stroke: #58d058; }
.c-body-r { fill: #000; stroke: #d81818; }
.c-body-g { fill: #0c780c; stroke: #0d800d; }
.c-body-d { fill: #58d058; stroke: #58d058; }

/* symbol tabs */
.symtabs { height: 24px; flex: none; display: flex; align-items: flex-start; padding-left: 15px; font: 11px "Noto Sans", sans-serif; letter-spacing: -.35px; color: #777; position: relative; background: #efefef; border-bottom: 1px solid #d8d8d8; }
.st { height: 22px; line-height: 21px; flex: none; }
.st1 { margin-right: 13px; }
.vbar { width: 1px; height: 12px; background: #888; flex: none; align-self: flex-start; margin-top: 5px; }
.st2 { margin: 0 11px 0 9px; }
.st3 { margin-left: 10px; }
.st-on { margin-left: 10px; width: 89px; height: 22px; background: #fff; color: #111; border: 1px solid #111; border-top: 0; text-align: center; }
.st4 { margin: 0 12px 0 11px; }
.scroll { position: absolute; right: 6px; top: 7px; display: flex; gap: 10px; }

/* terminal */
.terminal { height: 160px; flex: none; display: flex; border-bottom: 1px solid #a6a6a6; }
.tside { width: 14px; margin-left: 2px; flex: none; position: relative; background: linear-gradient(#efefef 0, #dde3e9 50%, #c9d2da 100%); margin-bottom: 4px; }
.tclose { position: absolute; left: 3px; top: 5px; }
.tlabel { position: absolute; bottom: 2px; left: 0; width: 14px; height: 44px; writing-mode: vertical-rl; transform: rotate(180deg); font: 10.500px "Noto Sans", sans-serif; letter-spacing: -.2px; color: #5d666e; line-height: 14px; }
.tbody { flex: 1; display: flex; flex-direction: column; background: #fff; margin-top: 2px; }
.row { display: grid; grid-template-columns: 122px 209px 86px 65px 84px 96px 92px 94px 94px 94px 94px 118px; font-size: 11px; letter-spacing: -.2px; align-items: stretch; }
.row > span { display: flex; align-items: center; justify-content: flex-end; padding-right: 5px; white-space: nowrap; }
.head { height: 25px; color: #333; background: linear-gradient(#fff 0, #fff 30%, #e8ebf6 50%, #e8ebf6 60%, #fff 80%); border-bottom: 2px solid #d5d5d5; }
.head > span { border-right: 1px solid #e4e4e4; padding-right: 6px; padding-top: 2px; }
.head .left { justify-content: flex-start; padding-left: 7px; }
.sort { margin-left: 14px; color: #888; font-size: 9px; }
.head .sorted { background: linear-gradient(#f2f8fd, #c2def5 50%, #bcdcf6 60%, #e8f3fb); border-right: 1px solid #a9c6df; }
.head .last { padding-right: 10px; border-right: 0; }
.item { height: 20px; border-bottom: 1px solid #ececec; }
.item > span { border-right: 1px solid #e6e6e6; padding-right: 3px; }
.item .left { justify-content: flex-start; padding-left: 3px; gap: 7px; }
.item .last { padding-right: 8px; border-right: 0; }
.sel { background: #3399ff; color: #fff; }
.sel > span { border-right-color: #7dbcf8; }
.balance { height: 20px; display: flex; align-items: center; padding-left: 3px; background: #c9c9c9; font-size: 11px; letter-spacing: -.2px; font-weight: 700; color: #222; }
.bal-text { margin-left: 9px; white-space: pre; }
.bal-total { margin-left: auto; margin-right: 8px; }
.tfill { flex: 1; }
.ttabs { height: 20px; flex: none; display: flex; align-items: flex-start; font-size: 10.500px; letter-spacing: -.3px; color: #777; background: #efefef; border-top: 1px solid #111; margin-bottom: 4px; }
.ttabs .vbar { margin-top: 3px; }
.tt-on { width: 48px; margin-left: 2px; height: 18px; background: #fff; color: #111; border: 1px solid #111; border-top: 0; text-align: center; line-height: 16px; }
.tt { margin: 0 10px 0 10px; line-height: 18px; }
.tt-first { margin: 0 11px 0 10px; }

/* status */
.status { flex: 1; display: flex; align-items: center; position: relative; font-size: 11px; letter-spacing: -.1px; color: #222; }
.sc { position: absolute; top: 2px; bottom: 1px; width: 1px; background: #a8a8a8; }
.s1 { left: 538px; } .s2 { left: 654px; } .s3 { left: 756px; } .s4 { left: 827px; } .s5 { left: 898px; } .s6 { left: 967px; } .s7 { left: 1036px; }
.s7 { display: none; }
.conn { position: absolute; left: 1108px; top: 5px; }
.kb { position: absolute; left: 1162px; top: 3px; }
.grip-corner { position: absolute; right: 2px; bottom: 1px; }

/* taskbar */
.taskbar { height: 30px; flex: none; margin-top: 8px; display: flex; align-items: center; position: relative; color: #fff;
  background: linear-gradient(#72777a 0, #54595d 15%, #3b4045 40%, #151a1e 55%, #0a1114 100%); font: 12px Lato, sans-serif; letter-spacing: -.12px; }
.orb { position: absolute; left: 8px; top: -6px; }
.quick { margin-left: 65px; width: 90px; flex: none; display: flex; align-items: center; gap: 7px; }
.more { margin-left: 17px; font-size: 14px; line-height: 14px; }
.tasks { margin-left: 8px; display: flex; gap: 4px; align-items: center; }
.task { width: 156px; height: 26px; flex: none; display: flex; align-items: center; gap: 3px; padding-left: 8px; white-space: nowrap; overflow: hidden; border: 1px solid #6a7276; border-radius: 3px; background: linear-gradient(#666b70 0, #4e5458 45%, #182328 50%, #27343a 100%); }
.task svg { flex: none; }
.task.active { background: linear-gradient(#2a2e30, #0e1214); border-color: #3c4144; }
.task.first svg { opacity: .8; }
.tray { margin-left: auto; display: flex; align-items: center; gap: 3px; padding-right: 17px; }
.chev { margin-right: 6px; }
.tray-gap { margin-left: 11px; }
.clock { margin-left: 5px; font-size: 12px; letter-spacing: -.1px; color: #e8ecef; }
```
FILE: chart.js
```js
// Candle data read off the chart, in three runs sharing a y origin and scale.
// Each candle: [kind, body top, body bottom, wick top, wick bottom]; r = falling, g = rising, d = doji.
var RUNS = [
  { y0: 340, k0: 0, rows: [
    ['r',415,448,410,468],['g',441,454,441,478],['r',445,478,440,493],['d',475,476,460,490],['r',472,483,465,493],['g',457,480,457,488],
    ['g',450,460,445,463],['g',427,445,408,455],['r',427,429,412,432],['r',428,452,428,460],['r',446,470,446,478],['d',475,476,468,482],
    ['d',477,478,470,484],['g',472,480,468,484],['r',470,488,470,490],['r',484,497,484,500],['r',497,506,497,506],['g',468,498,438,505],
    ['g',405,464,400,466],['g',400,413,350,440],['r',403,416,360,425],['r',418,446,410,495],['r',447,473,425,480],['g',433,470,433,513],
    ['r',433,478,433,500],['g',418,475,385,488],['g',400,422,375,422],['g',330,400,325,404],['r',328,362,320,364],['g',343,361,343,361],
    ['r',340,436,340,480],['r',433,488,433,490],['g',430,495,420,548],['g',360,428,338,455],['g',277,358,265,358],['r',277,333,277,358],
    ['g',273,338,262,360],['g',228,275,220,326],['g',190,234,132,240],['g',96,190,76,210],['r',98,122,98,162],['r',124,148,112,168],
    ['r',148,193,148,206],['g',185,187,184,216],['g',180,192,170,200],['g',105,180,98,180],['r',105,135,98,150],['g',128,131,125,150],
    ['r',133,141,115,145],['g',33,143,20,143],['r',37,52,26,76],['r',55,75,55,85]
  ]},
  { y0: 200, k0: 52, rows: [
    ['g',470,487,470,487],['r',467,470,467,478],['r',470,475,470,478],['r',470,478,470,480],['d',478,479,460,483],['g',470,482,470,482],
    ['r',470,480,463,488],['r',483,515,483,515],['r',520,535,490,538],['r',530,548,530,548],['r',545,550,545,552],['g',545,548,545,550],
    ['r',547,549,540,553],['g',513,548,513,548],['g',503,515,503,515],['r',503,527,503,540],['r',525,557,525,557],['g',543,558,543,558],
    ['r',537,570,525,585],['g',572,585,540,585],['r',572,602,532,622],['g',595,597,592,615],['g',541,600,482,600],['g',533,546,505,565],
    ['r',538,562,538,590],['g',530,560,530,585],['g',500,545,475,550],['r',510,530,510,530],['g',515,520,500,525],['r',510,515,510,550],
    ['g',485,518,485,535],['g',432,490,432,505],['g',333,438,333,440],['g',213,335,213,345],['g',82,218,42,218],['d',87,88,72,138],
    ['r',92,110,80,122],['r',110,132,100,140],['r',127,148,127,148],['r',145,172,105,178],['r',172,187,165,200],['g',172,185,165,185],
    ['g',122,170,112,170],['r',118,132,108,142],['g',70,135,55,135],['g',55,68,45,78],['r',52,82,52,118],['r',80,106,78,106],
    ['g',96,106,96,106],['g',95,98,95,125],['g',88,98,55,98]
  ]},
  { y0: 100, k0: 103, rows: [
    ['g',300,385,255,385],['g',213,295,213,295],['g',188,218,142,218],['r',195,225,185,225],['g',215,225,215,245],['g',200,215,200,215],
    ['g',178,200,178,200],['g',158,180,158,180],['d',154,156,140,172],['g',100,152,100,152],['g',92,102,92,120],['r',85,135,85,135],
    ['r',140,160,140,170],['g',128,160,128,160],['g',127,129,100,155],['g',100,140,100,140],['d',101,103,100,130],['r',104,106,104,115]
  ]}
];

var NS = 'http://www.w3.org/2000/svg';
var host = document.getElementById('candles');

function el(name, attrs) {
  var node = document.createElementNS(NS, name);
  for (var key in attrs) node.setAttribute(key, attrs[key]);
  host.appendChild(node);
}

RUNS.forEach(function (run) {
  run.rows.forEach(function (row, i) {
    var x = 21.5 + 8 * (run.k0 + i);
    var py = function (z) { return run.y0 + z / 3; };
    el('line', { x1: x, x2: x, y1: py(row[3]), y2: py(row[4]), 'class': 'c-wick-' + row[0] });
    var top = Math.round(py(row[1])) + 0.5;
    var h = Math.max(Math.round((row[2] - row[1]) / 3), row[0] === 'd' ? 0 : 1);
    el('rect', { x: x - 2, y: top, width: 4, height: h, 'class': 'c-body-' + row[0] });
  });
});
```
